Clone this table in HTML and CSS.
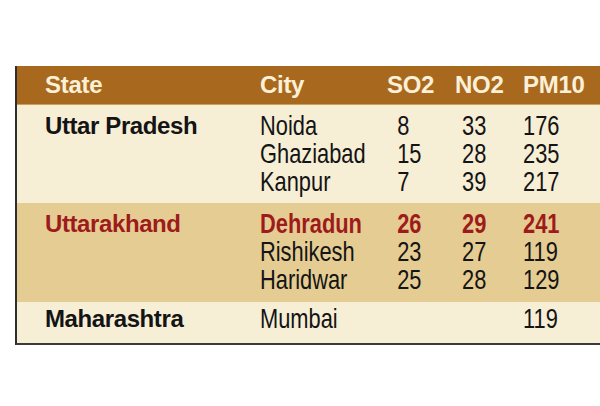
FILE: index.html
```html
<!DOCTYPE html>
<html lang="en">
<head>
  <meta charset="utf-8">
  <title>Air quality by city</title>
  <link rel="stylesheet" href="styles.css">
</head>
<body>
  <div class="table">
    <div class="row head">
      <div>State</div>
      <div>City</div>
      <div>SO2</div>
      <div>NO2</div>
      <div>PM10</div>
    </div>

    <div class="row group light first">
      <div class="state">Uttar Pradesh</div>
      <div class="cell city">Noida<br>Ghaziabad<br>Kanpur</div>
      <div class="cell so2">8<br>15<br>7</div>
      <div class="cell no2">33<br>28<br>39</div>
      <div class="cell pm10">176<br>235<br>217</div>
    </div>

    <div class="row group dark">
      <div class="state red">Uttarakhand</div>
      <div class="cell city"><b class="red">Dehradun</b><br>Rishikesh<br>Haridwar</div>
      <div class="cell so2"><b class="red">26</b><br>23<br>25</div>
      <div class="cell no2"><b class="red">29</b><br>27<br>28</div>
      <div class="cell pm10"><b class="red">241</b><br>119<br>129</div>
    </div>

    <div class="row group light last">
      <div class="state">Maharashtra</div>
      <div class="cell city">Mumbai</div>
      <div class="cell so2"></div>
      <div class="cell no2"></div>
      <div class="cell pm10">119</div>
    </div>
  </div>
</body>
</html>
```

FILE: styles.css
```css
body {
  margin: 0;
  background: #fff;
  overflow: hidden;
  font-family: "Liberation Sans", Arial, sans-serif;
}

.table {
  margin: 66px 0 0 15px;
  width: 600px;
  border-left: 2px solid #2e2e2e;
  border-bottom: 2px solid #3a3a3a;
}

.row {
  display: grid;
  grid-template-columns: 215px 127px 68px 68px 1fr;
  padding-left: 28px;
}

.head {
  height: 39px;
  align-items: center;
  background: #a8691e;
  color: #fcf1d8;
  font-weight: bold;
  font-size: 24px;
  letter-spacing: -0.3px;
  border-bottom: 1px solid #c9a261;
  box-sizing: border-box;
}

.group {
  line-height: 28px;
  color: #141414;
}

.light { background: #f7eed6; }
.dark { background: #e5cc92; }

.first { padding-top: 7px; padding-bottom: 7px; }
.dark { padding-top: 7px; padding-bottom: 8px; }
.last { padding-top: 3px; padding-bottom: 10px; }

.state {
  font-weight: bold;
  font-size: 24px;
  letter-spacing: -0.4px;
}

/* the print font is a narrow grotesque; squeeze the regular one */
.cell {
  font-size: 28px;
  transform: scaleX(0.78);
  transform-origin: left top;
  white-space: nowrap;
}

.so2 { padding-left: 13px; }
.no2 { padding-left: 9px; }

.red { color: #9e1b1b; }
```
